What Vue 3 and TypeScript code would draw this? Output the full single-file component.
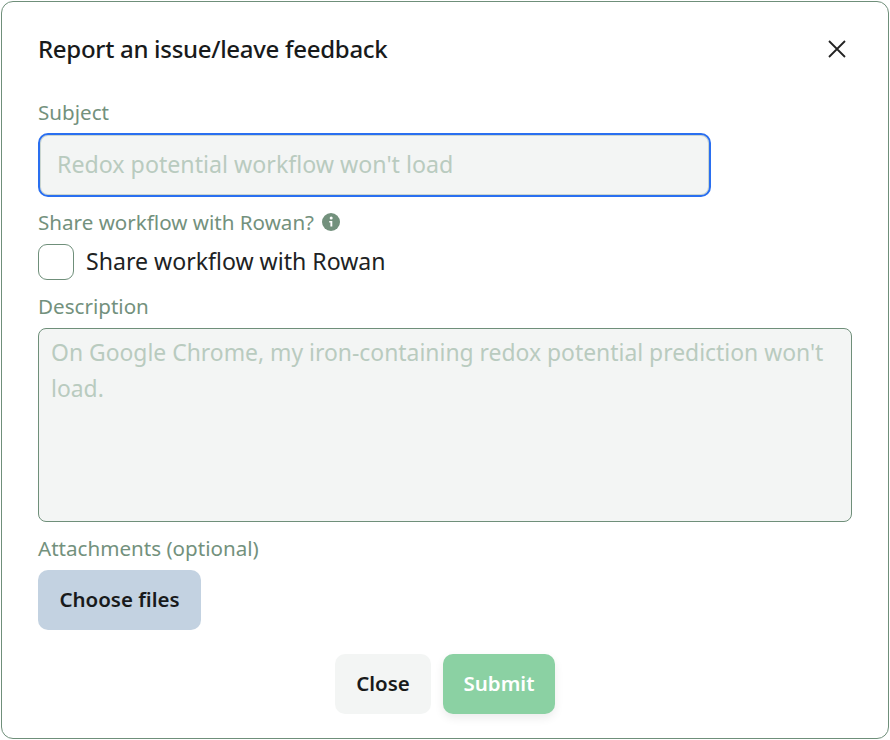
<script setup lang="ts">
const title: string = 'Report an issue/leave feedback'
</script>

<template>
  <div class="page">
    <form class="dialog" @submit.prevent>
      <header class="head">
        <h2 class="title">{{ title }}</h2>
        <button type="button" class="x" aria-label="Close">
          <svg width="20" height="20" viewBox="0 0 20 20" fill="none" stroke="#222" stroke-width="1.8">
            <path d="M2 2 L18 18 M18 2 L2 18" />
          </svg>
        </button>
      </header>

      <label class="label subject-label" for="subject">Subject</label>
      <input id="subject" class="subject" type="text" placeholder="Redox potential workflow won't load" />

      <div class="label share-label">
        <span>Share workflow with Rowan?</span>
        <svg class="info" width="18" height="18" viewBox="0 0 18 18">
          <circle cx="9" cy="9" r="9" fill="#73917d" />
          <circle cx="9.2" cy="5" r="1.5" fill="#fff" />
          <path d="M7.2 7.9 H10.3 V13.4 H8.4 V9.5 H7.2 Z" fill="#fff" />
        </svg>
      </div>
      <label class="check">
        <input type="checkbox" class="box" />
        <span class="check-text">Share workflow with Rowan</span>
      </label>

      <label class="label desc-label" for="desc">Description</label>
      <textarea id="desc" class="desc" placeholder="On Google Chrome, my iron-containing redox potential prediction won't load."></textarea>

      <div class="label attach-label">Attachments (optional)</div>
      <button type="button" class="btn choose">Choose files</button>

      <footer class="foot">
        <button type="button" class="btn close">Close</button>
        <button type="submit" class="btn submit">Submit</button>
      </footer>
    </form>
  </div>
</template>

<style scoped>
.page {
  width: 890px;
  height: 740px;
  padding: 1px;
  box-sizing: border-box;
  font-family: "Noto Sans", "DejaVu Sans", sans-serif;
  background: #fff;
}
.dialog {
  width: 888px;
  height: 738px;
  box-sizing: border-box;
  border: 1px solid #6f8f7a;
  border-radius: 12px;
  padding: 0 36px;
  display: flex;
  flex-direction: column;
  align-items: flex-start;
  background: #fff;
}
.head {
  width: 100%;
  height: 94px;
  flex: none;
  display: flex;
  align-items: center;
  justify-content: space-between;
}
.title {
  margin: 0;
  font-size: 24px;
  font-weight: 500;
  line-height: 32px;
  color: #181a1b;
  letter-spacing: -0.3px;
}
.x {
  border: 0;
  background: none;
  padding: 0;
  margin-right: 5px;
  width: 20px;
  height: 20px;
  display: block;
}
.x svg { display: block; }
.label {
  font-size: 20.6px;
  line-height: 28px;
  color: #73917d;
  height: 28px;
}
.subject-label { margin-top: 2px; margin-bottom: 7px; }
.subject {
  width: 673px;
  height: 64px;
  flex: none;
  box-sizing: border-box;
  border: 2px solid #2a6ff0;
  box-shadow: inset 0 0 0 1px rgba(111, 143, 122, 0.3);
  border-radius: 10px;
  background: #f3f5f4;
  padding: 0 17px 2px;
  font: inherit;
  font-size: 23.2px;
  outline: none;
  color: #181a1b;
}
.subject::placeholder { color: #b9cbbf; opacity: 1; }
.share-label {
  margin-top: 11px;
  display: flex;
  align-items: center;
  gap: 8px;
}
.info { display: block; }
.check {
  margin-top: 8px;
  display: flex;
  align-items: center;
  gap: 12px;
  font-size: 23.1px;
  line-height: 36px;
  color: #202223;
}
.check-text { padding-bottom: 2px; line-height: 34px; }
.box {
  appearance: none;
  margin: 0;
  width: 36px;
  height: 36px;
  box-sizing: border-box;
  border: 1px solid #6f8f7a;
  border-radius: 9px;
  background: #fff;
}
.desc-label { margin-top: 12px; margin-bottom: 8px; }
.desc {
  width: 814px;
  height: 194px;
  flex: none;
  box-sizing: border-box;
  border: 1px solid #6f8f7a;
  border-radius: 8px;
  background: #f3f5f4;
  padding: 6px 12px;
  font: inherit;
  font-size: 22.9px;
  line-height: 36px;
  resize: none;
  outline: none;
  display: block;
}
.desc::placeholder { color: #b9cbbf; opacity: 1; }
.attach-label { margin-top: 12px; margin-bottom: 8px; }
.btn {
  border: 0;
  height: 60px;
  border-radius: 10px;
  font: inherit;
  font-size: 20.5px;
  font-weight: 600;
  color: #181a1b;
  padding: 0 0 2px;
  flex: none;
}
.choose { width: 163px; background: #c3d2e1; }
.foot {
  width: 100%;
  margin-top: 24px;
  display: flex;
  justify-content: center;
  gap: 12px;
}
.close { width: 96px; background: #f3f5f4; }
.submit {
  width: 112px;
  background: #8bd1a3;
  color: #fff;
  box-shadow: 0 4px 10px rgba(0, 0, 0, 0.08);
}
</style>

<style>
html, body { margin: 0; padding: 0; background: #fff; }
</style>
